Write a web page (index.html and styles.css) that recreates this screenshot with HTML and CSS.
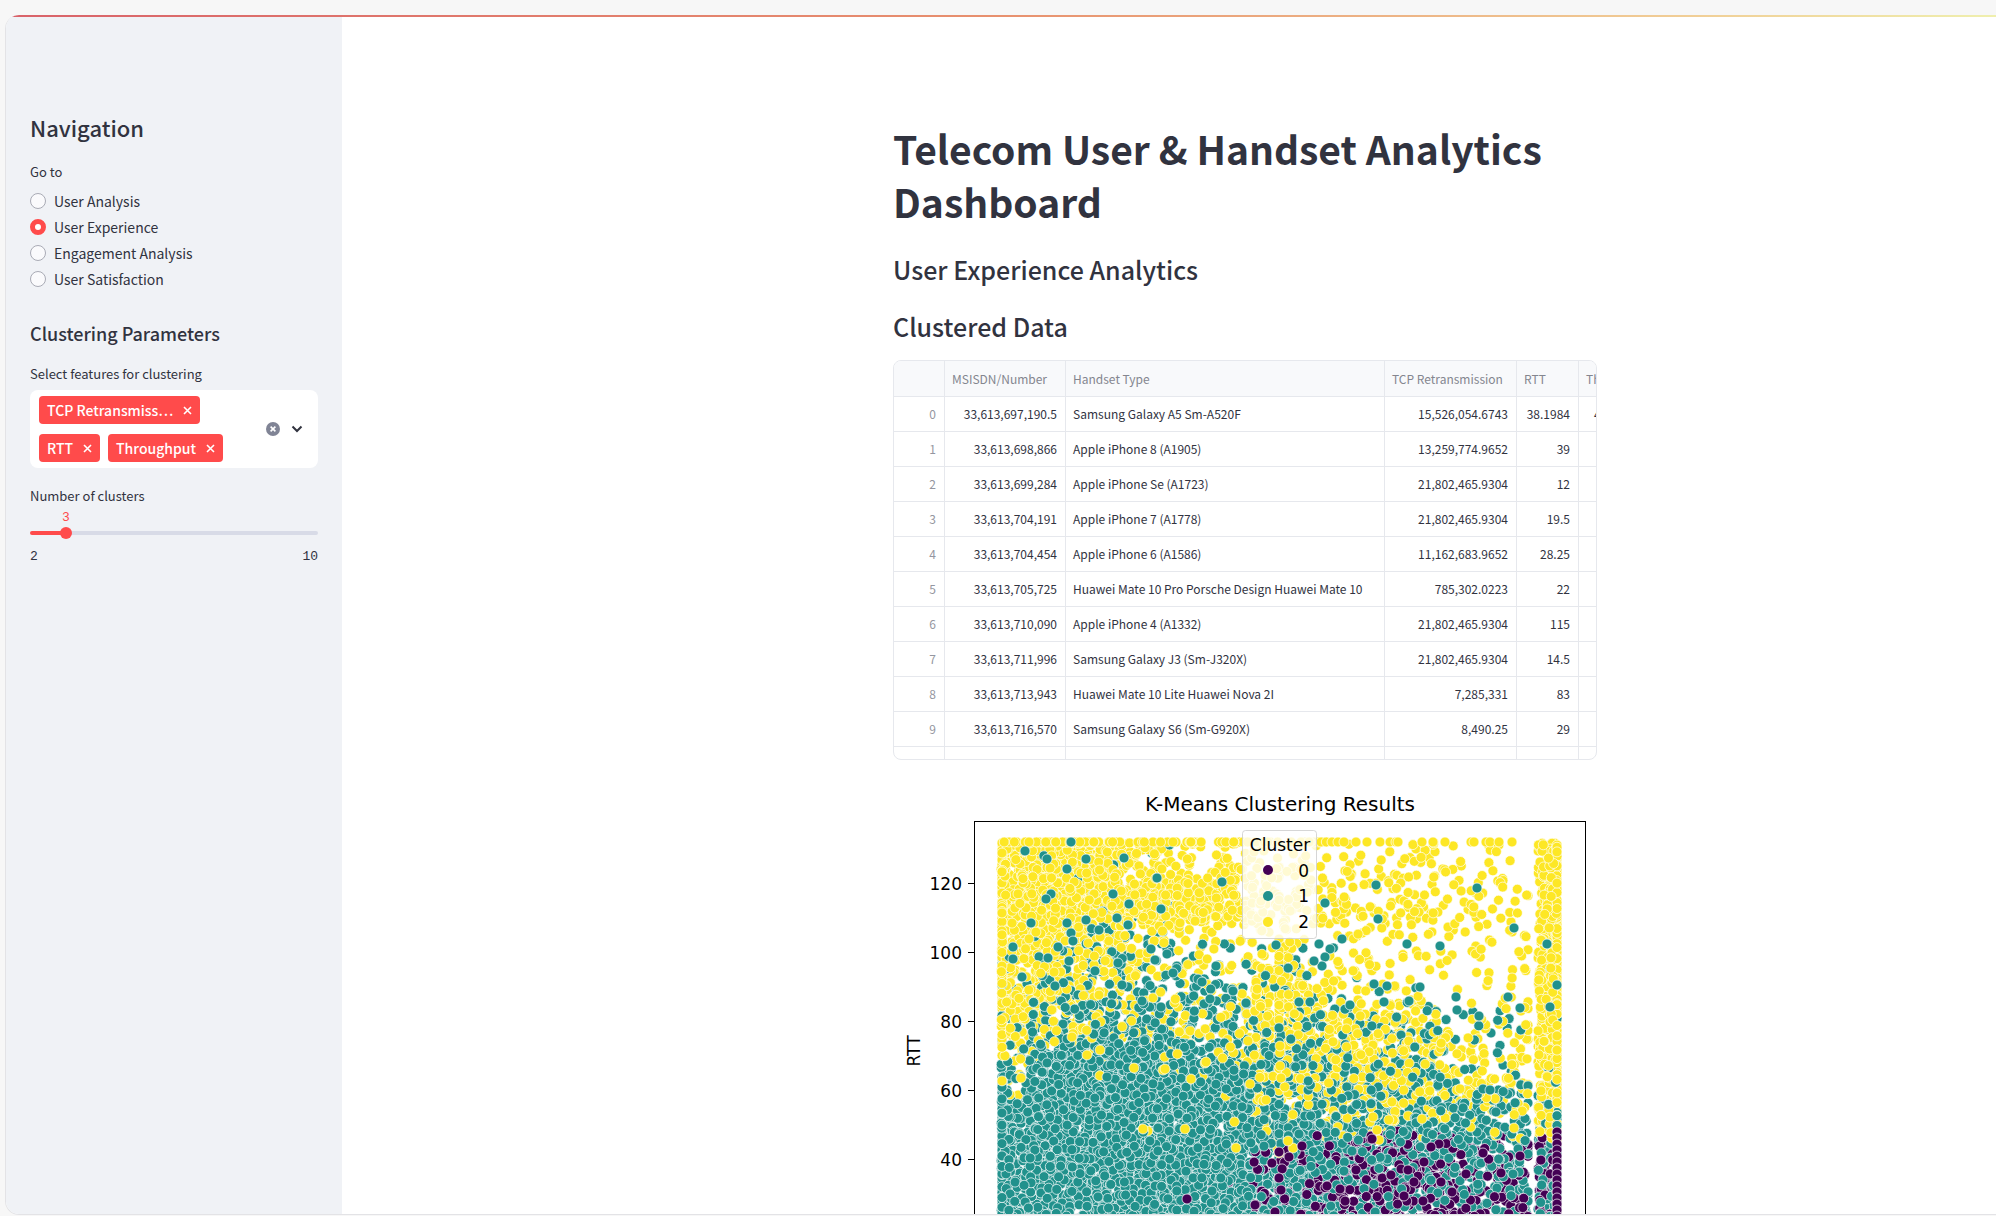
FILE: index.html
```html
<!DOCTYPE html>
<html lang="en">
<head>
<meta charset="utf-8">
<meta name="viewport" content="width=device-width, initial-scale=1">
<title>Telecom User &amp; Handset Analytics Dashboard</title>
<link rel="stylesheet" href="styles.css">
</head>
<body>
<div class="app">
  <aside class="sidebar">
    <h2 class="nav-title">Navigation</h2>
    <fieldset class="radio-group">
      <legend class="field-label">Go to</legend>
      <label class="radio"><input type="radio" name="page"><span>User Analysis</span></label>
      <label class="radio"><input type="radio" name="page" checked><span>User Experience</span></label>
      <label class="radio"><input type="radio" name="page"><span>Engagement Analysis</span></label>
      <label class="radio"><input type="radio" name="page"><span>User Satisfaction</span></label>
    </fieldset>
    <h3 class="section-title">Clustering Parameters</h3>
    <div class="field-label" id="features-label">Select features for clustering</div>
    <div class="multiselect" role="group" aria-labelledby="features-label">
      <div class="tags">
        <button type="button" class="tag"><span>TCP Retransmiss…</span><svg viewBox="0 0 9 9" aria-hidden="true"><path d="M1 1l7 7M8 1l-7 7"/></svg></button>
        <button type="button" class="tag"><span>RTT</span><svg viewBox="0 0 9 9" aria-hidden="true"><path d="M1 1l7 7M8 1l-7 7"/></svg></button>
        <button type="button" class="tag"><span>Throughput</span><svg viewBox="0 0 9 9" aria-hidden="true"><path d="M1 1l7 7M8 1l-7 7"/></svg></button>
      </div>
      <button type="button" class="icon-button" aria-label="Clear all"><svg class="clear" viewBox="0 0 14 14"><circle cx="7" cy="7" r="7" stroke="none"/><path d="M4.6 4.6l4.8 4.8M9.4 4.6l-4.8 4.8"/></svg></button>
      <button type="button" class="icon-button" aria-label="Open"><svg class="chevron" viewBox="0 0 10 6"><path d="M.5 .5l4.500 4.500 4.500-4.500"/></svg></button>
    </div>
    <label class="field-label" for="clusters">Number of clusters</label>
    <div class="slider">
      <div class="slider-value"><output for="clusters">3</output></div>
      <div class="rail"><input id="clusters" type="range" min="2" max="10" value="3"></div>
      <div class="slider-limits"><span>2</span><span>10</span></div>
    </div>
  </aside>

  <main class="main">
    <div class="content">
      <h1>Telecom User &amp; Handset Analytics Dashboard</h1>
      <h2>User Experience Analytics</h2>
      <h2>Clustered Data</h2>
      <div class="table-wrap">
        <table>
          <colgroup><col class="c-index"><col class="c-msisdn"><col class="c-handset"><col class="c-tcp"><col class="c-rtt"><col class="c-throughput"></colgroup>
          <thead><tr><th></th><th>MSISDN/Number</th><th>Handset Type</th><th>TCP Retransmission</th><th>RTT</th><th>Throughput</th></tr></thead>
          <tbody>
            <tr><td>0</td><td>33,613,697,190.5</td><td>Samsung Galaxy A5 Sm-A520F</td><td>15,526,054.6743</td><td>38.1984</td><td>4,281.9304</td></tr>
            <tr><td>1</td><td>33,613,698,866</td><td>Apple iPhone 8 (A1905)</td><td>13,259,774.9652</td><td>39</td><td></td></tr>
            <tr><td>2</td><td>33,613,699,284</td><td>Apple iPhone Se (A1723)</td><td>21,802,465.9304</td><td>12</td><td></td></tr>
            <tr><td>3</td><td>33,613,704,191</td><td>Apple iPhone 7 (A1778)</td><td>21,802,465.9304</td><td>19.5</td><td></td></tr>
            <tr><td>4</td><td>33,613,704,454</td><td>Apple iPhone 6 (A1586)</td><td>11,162,683.9652</td><td>28.25</td><td></td></tr>
            <tr><td>5</td><td>33,613,705,725</td><td>Huawei Mate 10 Pro Porsche Design Huawei Mate 10</td><td>785,302.0223</td><td>22</td><td></td></tr>
            <tr><td>6</td><td>33,613,710,090</td><td>Apple iPhone 4 (A1332)</td><td>21,802,465.9304</td><td>115</td><td></td></tr>
            <tr><td>7</td><td>33,613,711,996</td><td>Samsung Galaxy J3 (Sm-J320X)</td><td>21,802,465.9304</td><td>14.5</td><td></td></tr>
            <tr><td>8</td><td>33,613,713,943</td><td>Huawei Mate 10 Lite Huawei Nova 2I</td><td>7,285,331</td><td>83</td><td></td></tr>
            <tr><td>9</td><td>33,613,716,570</td><td>Samsung Galaxy S6 (Sm-G920X)</td><td>8,490.25</td><td>29</td><td></td></tr>
            <tr><td></td><td></td><td></td><td></td><td></td><td></td></tr>
          </tbody>
        </table>
      </div>
      <svg class="chart" viewBox="0 0 704 520" role="img" aria-label="K-Means Clustering Results">
        <text class="chart-title" x="387" y="26">K-Means Clustering Results</text>
        <g id="points" class="points"></g>
        <rect class="frame" x="81.5" y="36.5" width="611" height="455"/>
        <path class="ticks" d="M75 98.5h6M75 167.5h6M75 236.5h6M75 305.5h6M75 374.5h6M75 443.5h6"/>
        <g class="tick-labels">
          <text x="69" y="105">120</text><text x="69" y="174">100</text><text x="69" y="243">80</text><text x="69" y="312">60</text><text x="69" y="381">40</text>
        </g>
        <text class="axis-label" transform="translate(27 266) rotate(-90)">RTT</text>
        <g class="legend">
          <rect x="349.5" y="45.5" width="74" height="108" rx="3"/>
          <text class="legend-title" x="387" y="66">Cluster</text>
          <circle class="k0" cx="375" cy="85" r="5"/><text x="416" y="92">0</text>
          <circle class="k1" cx="375" cy="111" r="5"/><text x="416" y="117">1</text>
          <circle class="k2" cx="375" cy="137" r="5"/><text x="416" y="143">2</text>
        </g>
      </svg>
    </div>
  </main>
</div>
<script src="chart.js"></script>
</body>
</html>
```

FILE: chart.js
```js
// Scatter plot: each character is a base-36 count of samples in a 28 x 20 bin.
const bins = {
  k2: [
    "kkkkd95466523245241k", "kkkkc897ba434354240k", "kkkkghkge9664353343k",
    "kkkkkkkkf8767676522k", "kigcac6446525433223k", "kgca862435512232322k",
    "kgc983434b834412123k", "kgb875564eg62341113k", "ica865755eg97762122k", "c88755665ac97884134k",
    "a632233448a98887424k", "6101113238997777423k", "3000101017676667653k",
    "0000000023545655323k", "0000010004234311111c", "00000000021000000000"
  ],
  k1: [
    "01111110000000000000", "01101000000000000000", "00110000000000000000",
    "01121100000000000000", "12343310000000000000", "24566432112100000000",
    "25776645223010000001", "379a7665423211100001", "38aba987834332221111", "49cedcb9876444331111",
    "7fkkkhfdb76644520102", "ckkkkkkkg87766652112", "gkkkkkkkkaa999775533",
    "kkkkkkkkkdbbbc977656", "kkkkkkkkkgffdcca9769", "kkkkkkkkkeeecbb9876a",
    "kkkkkkkkkdee9778655a", "kkkkkkkkkdee8778556a", "kkkkkkkkkded8778556a"
  ],
  k0: [
    "", "", "", "", "", "", "", "", "", "", "", "", "", "",
    "00000000002234421104", "0000000013567764443a", "000000002567aa87654c",
    "000001012569bba8754c", "00000212356abbb8754c"
  ]
};
const topRow = [1332, 1338, 1344, 1356, 1367, 1380, 1390, 1396, 1398, 1422, 1433, 1445, 1471, 1474, 1486, 1490, 1499, 1512];
const outliers = [
  ["k1", "1071,843 1025,852 1047,860 1086,860 1124,859 1157,879 1222,883 1067,870 1051,895 1046,900 1117,919 1128,926 1129,905 1031,924 1067,924 1071,934 1073,942 1013,948 1058,948 1086,921 1099,931 1013,960 1048,959 1069,962 1118,964 1151,950 1167,955 1155,961 1173,974 1216,967 1202,983 1022,978 1055,987 1095,972 1122,986 1142,1002 1161,1008 1210,1000 1233,992 1246,1004 1276,946 1376,886 1325,904 1342,940 1319,945 1330,950 1325,958 1322,967 1314,962 1407,945 1440,947 1514,929 1547,945 1374,985 1387,987 1420,988 1557,986 1384,1003 1350,1006 1457,1011 1456,998 1310,1003 1299,1003 1520,1009 1550,1008 1479,1017 1409,1002 1508,998 1477,889 1378,920 1161,910 1113,895 1299,1135"],
  ["k2", "1072,1038 1087,1056 1100,1051 1021,1079 1134,1069 1163,1071 1165,1070 1191,1080 1205,1064 1206,1063 1248,1042 1250,1085 1263,1102 1266,1101 1143,1130 1185,1130 1236,1149 1280,1047 1280,1067 1281,1079 1293,1149 1370,1123 1373,1118 1377,1131 1379,1141 1514,1129 1422,1120 1288,1142"],
  ["k0", "1187,1200 1279,1153 1279,1179 1281,1191 1302,1147 1289,1158 1372,1140 1439,1145 1431,1148 1483,1154 1520,1157 1501,1174 1391,1176 1327,1187 1340,1190 1414,1183 1401,1170 1408,1171 1424,1163 1404,1197 1423,1202 1441,1183 1466,1175 1452,1193 1255,1206 1275,1213"]
];

let seed = 20240;
function random() {
  seed = (seed * 1664525 + 1013904223) >>> 0;
  return seed / 4294967296;
}

// The bins hold relative counts; the lower right of the plot is sampled more densely.
function weight(n, r, c) {
  if (c === 19) return n * 2;
  if (n > 14) return n * 1.9;
  if (c >= 9 && r >= 13) return n * 1.9;
  if (c >= 9 && r >= 8) return n * 2;
  if (c >= 9 && r >= 1) return n * 1.4;
  return n * 1.2;
}

const samples = [];
for (const [cluster, rows] of Object.entries(bins)) {
  rows.forEach((row, r) => [...row].forEach((char, c) => {
    const count = Math.round(weight(parseInt(char, 36), r, c));
    for (let i = 0; i < count; i++) {
      let y = 843 + 20 * (r + random());
      let x = 1001 + 28 * (c + random());
      if (cluster === "k0") y = Math.max(y, 1132 + 8 * random());
      if (c === 19) x = i % 3 ? 1538 + 19 * random() : 1557;
      else if (c === 0 && i % 4 === 0) x = 1002;
      else if (c === 9 && x > 1268 && i % 2) x = 1279;
      else if (c === 18) x = Math.min(x, 1528);
      samples.push([x, y, cluster]);
    }
  }));
}
for (let i = samples.length - 1; i > 0; i--) {
  const j = Math.floor(random() * (i + 1));
  [samples[i], samples[j]] = [samples[j], samples[i]];
}
for (let i = 0; i < 90; i++) samples.push([1002 + 325 * random(), 843, "k2"]);
for (const x of topRow) samples.push([x, 843, "k2"]);
for (let y = 1133; y < 1230; y += 6) samples.push([1557, y, "k0"]);
for (const [cluster, list] of outliers) {
  for (const pair of list.split(" ")) samples.push([...pair.split(",").map(Number), cluster]);
}

document.getElementById("points").innerHTML = samples.map(([x, y, cluster]) =>
  `<circle class="${cluster}" cx="${(x - 893).toFixed(1)}" cy="${(y - 786).toFixed(1)}" r="5"/>`).join("");
```

FILE: styles.css
```css
* { box-sizing: border-box; }

body {
  margin: 0;
  height: 100vh;
  overflow: hidden;
  padding: 15px 0 1px 5px;
  background: #f7f7f7;
  color: #31333f;
  font-family: "Noto Sans CJK SC", "Noto Sans", sans-serif;
}

h1, h2, h3 { margin: 0; font-weight: 600; }
button { border: 0; padding: 0; background: none; color: inherit; font: inherit; cursor: pointer; }

.app {
  display: flex;
  height: 100%;
  overflow: hidden;
  border: 1px solid #e3e3e6;
  border-width: 0 0 1px 1px;
  border-radius: 14px 0 0 14px;
  background: linear-gradient(90deg, #d9636a, #e8916f 50%, #f1cf97 85%, #efefae) top / 100% 2px no-repeat, #fff;
  padding-top: 2px;
}

.sidebar {
  flex: 0 0 336px;
  padding: 94px 24px 0;
  background: #f0f2f6;
}

.nav-title { font-size: 22px; line-height: 32px; font-weight: 500; }
.section-title { margin: 29px 0 17px; font-size: 18px; line-height: 24px; font-weight: 500; }
.field-label { display: block; padding: 0; font-size: 13px; line-height: 24px; }

.radio-group { margin: 17px 0 0; padding: 0; border: 0; }
.radio-group .field-label { margin-bottom: 4px; }
.radio { display: flex; align-items: center; gap: 8px; height: 26px; font-size: 14px; line-height: 24px; }
.radio input {
  appearance: none;
  width: 16px;
  height: 16px;
  margin: 0;
  border: 1px solid #a9abb5;
  border-radius: 50%;
  background: #fafafc;
}
.radio input:checked { border: 5px solid #ff4b4b; background: #fff; }

.multiselect {
  display: flex;
  align-items: center;
  gap: 8px;
  margin: 4px 0 16px;
  padding: 6px 13px 6px 9px;
  border-radius: 8px;
  background: #fff;
}
.tags { display: flex; flex: 1; flex-wrap: wrap; gap: 10px 8px; padding-right: 16px; }
.tag {
  display: flex;
  align-items: center;
  gap: 10px;
  height: 28px;
  padding: 0 8px;
  border-radius: 4px;
  background: #ff4b4b;
  color: #fff;
  font-size: 14px;
  line-height: 28px;
  font-weight: 500;
}
.tag svg { width: 9px; height: 9px; stroke: #fff; stroke-width: 1.6; fill: none; }
.icon-button { display: flex; align-items: center; justify-content: center; width: 16px; height: 24px; }
.clear { width: 14px; height: 14px; fill: #808495; stroke: #fff; stroke-width: 1.6; }
.chevron { width: 10px; height: 6px; overflow: visible; fill: none; stroke: #31333f; stroke-width: 2; }

.slider { padding-top: 2px; font-family: "Liberation Mono", monospace; font-size: 13px; line-height: 16px; }
.slider-value { width: 25%; text-align: center; color: #ff4b4b; }
.rail {
  display: flex;
  align-items: center;
  height: 4px;
  margin: 5px 0 7px;
  border-radius: 2px;
  background: linear-gradient(90deg, #ff4b4b 12.5%, #d8dbe7 12.5%);
}
.rail input { appearance: none; flex: 1; min-width: 0; height: 12px; margin: 0 -6px; background: transparent; }
.rail input::-webkit-slider-thumb { appearance: none; width: 12px; height: 12px; border-radius: 50%; background: #ff4b4b; }
.slider-limits { display: flex; justify-content: space-between; padding-top: 7px; }

.main { flex: 1; min-width: 0; padding: 105px 0 0 152px; }
.content { max-width: 704px; margin: 0 auto; }
.content h1 { margin-bottom: 21px; font-size: 39px; line-height: 53px; font-weight: 700; }
.content h2 { margin-bottom: 17px; font-size: 25px; line-height: 40px; font-weight: 500; }
.content h2 + .table-wrap { margin-top: -3px; }

.table-wrap { height: 400px; overflow: hidden; border: 1px solid #e6e8ed; border-radius: 8px; }
table { width: 769px; table-layout: fixed; border-collapse: separate; border-spacing: 0; font-size: 12px; line-height: 20px; }
.c-index { width: 51px; }
.c-msisdn { width: 121px; }
.c-handset { width: 319px; }
.c-tcp { width: 132px; }
.c-rtt { width: 62px; }
.c-throughput { width: 84px; }
th, td { height: 35px; padding: 0 8px 0 7px; border: 0 solid #e6e8ed; border-width: 0 1px 1px 0; text-align: right; white-space: nowrap; }
th { height: 36px; padding-right: 0; background: #f8f9fb; color: #84868f; font-weight: 400; text-align: left; }
td:first-child { color: #9496a0; }
td:nth-child(3) { text-align: left; }

.chart { display: block; width: 100%; margin-top: 25px; font-family: "DejaVu Sans", sans-serif; font-size: 17px; }
.chart-title { font-size: 20px; text-anchor: middle; }
.frame { fill: none; stroke: #000; }
.ticks { stroke: #000; }
.tick-labels text { text-anchor: end; }
.axis-label { text-anchor: middle; }
.points circle { stroke: #fff; stroke-width: .7; }
.k0 { fill: #440154; }
.k1 { fill: #21918c; }
.k2 { fill: #fde725; }
.legend rect { fill: #fff; fill-opacity: .8; stroke: #ccc; stroke-opacity: .8; }
.legend text { text-anchor: end; }
.legend .legend-title { text-anchor: middle; }
```
